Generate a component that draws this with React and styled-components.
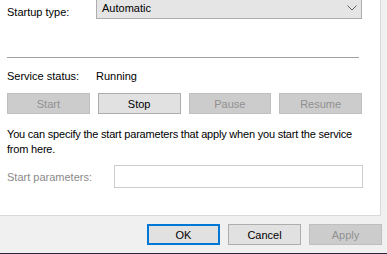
import React from "react";
import styled, { createGlobalStyle } from "styled-components";

const Global = createGlobalStyle`
  html, body { margin: 0; padding: 0; background: #f0f0f0; }
  body { font-family: "Liberation Sans", Arial, sans-serif; font-size: 11px; color: #000; }
`;

const Window = styled.div`
  width: 387px;
  height: 254px;
  background: #f0f0f0;
  display: flex;
  flex-direction: column;
  overflow: hidden;
`;

const TabPage = styled.div`
  width: 366px;
  height: 215px;
  flex: none;
  background: #fff;
  border-right: 1px solid #d9d9d9;
  border-bottom: 1px solid #d9d9d9;
  padding: 0 7px;
  display: flex;
  flex-direction: column;
`;

const Row = styled.div`
  display: flex;
  align-items: center;
  height: ${(p) => (p.$h ? p.$h + "px" : "auto")};
  margin-top: ${(p) => p.$mt || 0}px;
`;

const Label = styled.span`
  width: ${(p) => p.$w || 89}px;
  flex: none;
  padding-top: ${(p) => p.$pt || 0}px;
  color: ${(p) => (p.$disabled ? "#8a8a8a" : "#000")};
  white-space: nowrap;
`;

const Value = styled.span`
  white-space: nowrap;
`;

const Combo = styled.div`
  width: 266px;
  height: 22px;
  margin-top: -3px;
  box-sizing: border-box;
  background: #e5e5e5;
  border: 1px solid #adadad;
  display: flex;
  align-items: center;
  justify-content: space-between;
  padding: 0 4px 0 5px;
`;

const Separator = styled.div`
  height: 1px;
  width: 352px;
  background: #a0a0a0;
  margin-top: 38px;
`;

const ButtonGrid = styled.div`
  display: grid;
  grid-template-columns: repeat(4, 1fr);
  column-gap: 8px;
  width: 355px;
  margin-top: 10px;
`;

const Btn = styled.div`
  height: 21px;
  box-sizing: border-box;
  display: flex;
  align-items: center;
  justify-content: center;
  background: ${(p) => (p.$disabled ? "#cccccc" : "#e1e1e1")};
  border: ${(p) =>
    p.$default ? "2px solid #0078d7" : p.$disabled ? "1px solid #bfbfbf" : "1px solid #adadad"};
  color: ${(p) => (p.$disabled ? "#919191" : "#000")};
  width: ${(p) => (p.$w ? p.$w + "px" : "auto")};
`;

const Paragraph = styled.p`
  margin: 13px 0 0 0;
  width: 355px;
  line-height: 15px;
  letter-spacing: -0.2px;
`;

const ParamInput = styled.div`
  width: 249px;
  height: 23px;
  box-sizing: border-box;
  border: 1px solid #cccccc;
  background: #fff;
`;

const Footer = styled.div`
  flex: 1;
  display: flex;
  justify-content: flex-end;
  align-items: flex-start;
  gap: 8px;
  padding: 8px 5px 0 0;
`;

const BottomEdge = styled.div`
  height: 1px;
  flex: none;
  background: #2b2640;
`;

const Chevron = () => (
  <svg width="10" height="6" viewBox="0 0 10 6">
    <polyline points="0.5,0.5 5,5 9.5,0.5" fill="none" stroke="#606060" strokeWidth="1" />
  </svg>
);

export default function App() {
  return (
    <>
      <Global />
      <Window>
        <TabPage>
          <Row>
            <Label $pt={4}>Startup type:</Label>
            <Combo>
              <Value>Automatic</Value>
              <Chevron />
            </Combo>
          </Row>
          <Separator />
          <Row $h={15} $mt={10}>
            <Label>Service status:</Label>
            <Value>Running</Value>
          </Row>
          <ButtonGrid>
            <Btn $disabled>Start</Btn>
            <Btn>Stop</Btn>
            <Btn $disabled>Pause</Btn>
            <Btn $disabled>Resume</Btn>
          </ButtonGrid>
          <Paragraph>
            You can specify the start parameters that apply when you start the service from here.
          </Paragraph>
          <Row $h={23} $mt={8}>
            <Label $w={107} $disabled>Start parameters:</Label>
            <ParamInput />
          </Row>
        </TabPage>
        <Footer>
          <Btn $default $w={73}>OK</Btn>
          <Btn $w={73}>Cancel</Btn>
          <Btn $disabled $w={73}>Apply</Btn>
        </Footer>
        <BottomEdge />
      </Window>
    </>
  );
}
